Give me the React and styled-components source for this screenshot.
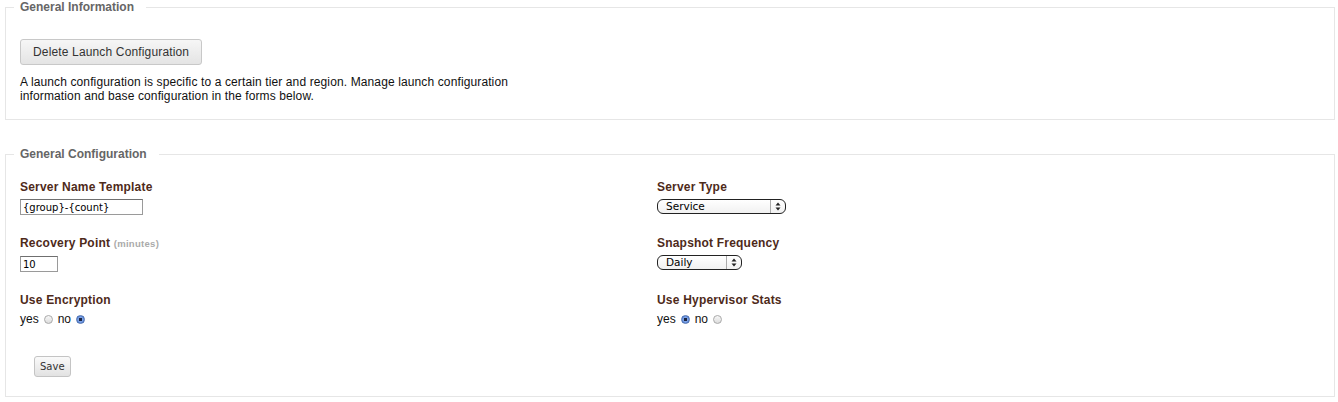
import React from "react";
import styled, { createGlobalStyle } from "styled-components";

const Global = createGlobalStyle`
  html, body { margin: 0; padding: 0; background: #fff; }
  body { font-family: "Liberation Sans", Arial, sans-serif; font-size: 12px; color: #222; }
`;

const Page = styled.div`
  padding: 0 3px 0 5px;
  display: flex;
  flex-direction: column;
  gap: 27px;
`;

const Fieldset = styled.fieldset`
  margin: 0;
  border: 1px solid #e6e6e6;
  padding: ${(p) => p.$pad};
  min-width: 0;
`;

const Legend = styled.legend`
  margin-left: -6px;
  padding: 0 12px 0 6px;
  font-weight: bold;
  font-size: 12px;
  line-height: 14px;
  color: #666;
`;

const GrayButton = styled.button`
  display: block;
  height: 26px;
  padding: 0 12px;
  font-family: "Liberation Sans", Arial, sans-serif;
  font-size: 12px;
  letter-spacing: 0.15px;
  color: #333;
  background: linear-gradient(#f6f6f6, #e4e4e4);
  border: 1px solid #c8c8c8;
  border-radius: 3px;
`;

const Intro = styled.p`
  margin: 10px 0 0;
  width: 520px;
  line-height: 14px;
  letter-spacing: 0.12px;
  color: #111;
`;

const Grid = styled.div`
  display: grid;
  grid-template-columns: 637px 1fr;
  row-gap: 21px;
`;

const Field = styled.div`
  display: flex;
  flex-direction: column;
  align-items: flex-start;
`;

const Label = styled.label`
  font-weight: bold;
  font-size: 12px;
  line-height: 14px;
  letter-spacing: 0.2px;
  color: #4e2a1a;
  margin-bottom: ${(p) => p.$gap || 5}px;
`;

const Hint = styled.span`
  font-size: 9.5px;
  letter-spacing: 0.3px;
  color: #aaa;
  font-weight: bold;
`;

const TextInput = styled.input`
  box-sizing: border-box;
  width: ${(p) => p.$w}px;
  height: 16px;
  padding: 0 2px;
  margin: 0;
  border: 1px solid #9a9a9a;
  border-top-color: #6f6f6f;
  font-family: "DejaVu Sans", sans-serif;
  font-size: 10px;
  color: #000;
  outline: none;
`;

const SelectWrap = styled.div`
  position: relative;
  display: inline-block;
  width: ${(p) => p.$w}px;
  height: 15px;
`;

const Select = styled.select`
  appearance: none;
  -webkit-appearance: none;
  box-sizing: border-box;
  width: 100%;
  height: 15px;
  margin: 0;
  padding: 0 0 0 8px;
  border: 1px solid #222;
  border-radius: 6px;
  background: linear-gradient(#fff, #f1f1f1);
  font-family: "DejaVu Sans", sans-serif;
  font-size: 10.5px;
  line-height: 13px;
  color: #000;
  outline: none;
`;

const Arrows = styled.span`
  position: absolute;
  right: 1px;
  top: 1px;
  bottom: 1px;
  width: 14px;
  border-left: 1px solid #aaa;
  display: flex;
  align-items: center;
  justify-content: center;
  pointer-events: none;
`;

const RadioRow = styled.div`
  display: flex;
  align-items: center;
  gap: 3px;
  line-height: 14px;
  font-size: 12px;
  color: #111;
  margin-top: 3px;
`;

const Radio = styled.input.attrs({ type: "radio" })`
  appearance: none;
  -webkit-appearance: none;
  box-sizing: border-box;
  width: 9px;
  height: 9px;
  margin: 1px 2px 0 2px;
  border-radius: 50%;
  border: 1px solid ${(p) => (p.defaultChecked ? "#4b6fb0" : "#a9a9a9")};
  background: ${(p) =>
    p.defaultChecked
      ? "radial-gradient(circle, #1c2540 0 1.5px, #7ea3e6 2px, #4a78d0 100%)"
      : "linear-gradient(#f8f8f8, #dcdcdc)"};
`;

const SaveButton = styled.button`
  display: block;
  margin: 30px 0 0 14px;
  height: 21px;
  padding: 0 5px;
  font-family: "DejaVu Sans", sans-serif;
  font-size: 10px;
  color: #333;
  background: linear-gradient(#fafafa, #e2e2e2);
  border: 1px solid #c4c4c4;
  border-radius: 3px;
`;

function UpDown() {
  return (
    <svg width="6" height="9" viewBox="0 0 6 9">
      <path d="M3 0.5 L5.5 3.5 L0.5 3.5 Z" fill="#222" />
      <path d="M3 8.5 L5.5 5.5 L0.5 5.5 Z" fill="#222" />
    </svg>
  );
}

function SelectBox({ width, value }) {
  return (
    <SelectWrap $w={width}>
      <Select defaultValue={value}>
        <option>{value}</option>
      </Select>
      <Arrows>
        <UpDown />
      </Arrows>
    </SelectWrap>
  );
}

export default function App() {
  return (
    <>
      <Global />
      <Page>
        <Fieldset $pad="25px 14px 16px">
          <Legend>General Information</Legend>
          <GrayButton>Delete Launch Configuration</GrayButton>
          <Intro>
            A launch configuration is specific to a certain tier and region. Manage launch configuration
            information and base configuration in the forms below.
          </Intro>
        </Fieldset>

        <Fieldset $pad="19px 14px 19px">
          <Legend>General Configuration</Legend>
          <Grid>
            <Field>
              <Label>Server Name Template</Label>
              <TextInput $w={123} defaultValue="{group}-{count}" />
            </Field>
            <Field>
              <Label>Server Type</Label>
              <SelectBox width={129} value="Service" />
            </Field>
            <Field>
              <Label>
                Recovery Point <Hint>(minutes)</Hint>
              </Label>
              <TextInput $w={38} defaultValue="10" />
            </Field>
            <Field>
              <Label>Snapshot Frequency</Label>
              <SelectBox width={85} value="Daily" />
            </Field>
            <Field>
              <Label $gap={2}>Use Encryption</Label>
              <RadioRow>
                yes <Radio name="enc" /> no <Radio name="enc" defaultChecked />
              </RadioRow>
            </Field>
            <Field>
              <Label $gap={2}>Use Hypervisor Stats</Label>
              <RadioRow>
                yes <Radio name="hyp" defaultChecked /> no <Radio name="hyp" />
              </RadioRow>
            </Field>
          </Grid>
          <SaveButton>Save</SaveButton>
        </Fieldset>
      </Page>
    </>
  );
}
